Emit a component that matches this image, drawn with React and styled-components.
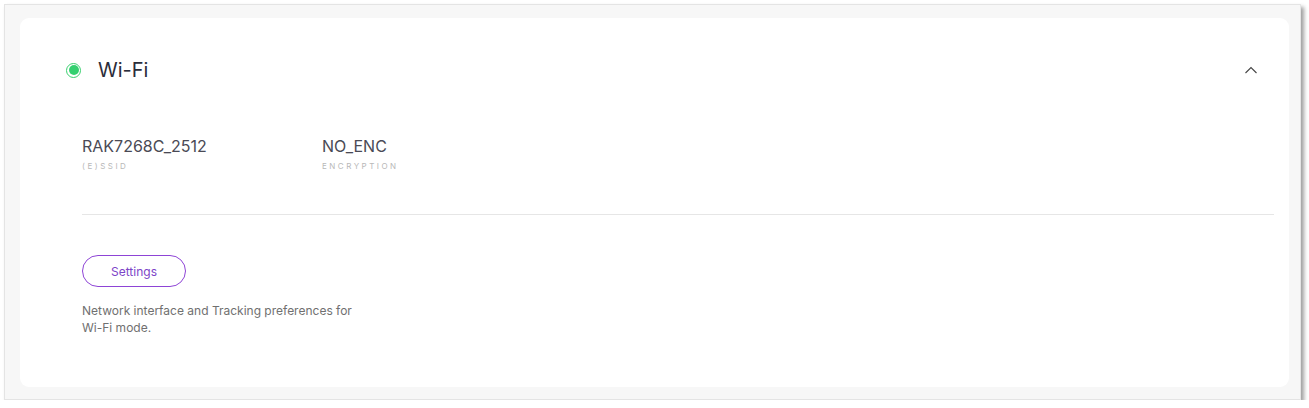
import React from "react";
import styled, { createGlobalStyle } from "styled-components";

const Global = createGlobalStyle`
  html, body { margin: 0; padding: 0; background: #ffffff; }
  body { font-family: Inter, "Noto Sans", sans-serif; }
  * { box-sizing: border-box; }
`;

const Frame = styled.div`
  margin: 4px 0 0 4px;
  width: 1297px;
  height: 396px;
  background: #f7f7f7;
  border: 1px solid #e4e4e4;
  box-shadow: 3px 3px 4px rgba(0, 0, 0, 0.38);
  padding: 13px 11px 12px 15px;
  display: flex;
`;

const Card = styled.section`
  flex: 1;
  background: #ffffff;
  border-radius: 9px;
  padding: 0 15px 0 62px;
  display: flex;
  flex-direction: column;
`;

const Header = styled.div`
  height: 104px;
  display: flex;
  align-items: center;
  margin-left: -16px;
`;

const StatusDot = styled.span`
  width: 15px;
  height: 15px;
  border-radius: 50%;
  border: 1.5px solid #3ad06f;
  display: flex;
  align-items: center;
  justify-content: center;
  &::after {
    content: "";
    width: 10px;
    height: 10px;
    border-radius: 50%;
    background: #34d070;
  }
`;

const Title = styled.h2`
  margin: 0 0 0 17px;
  font-size: 20px;
  font-weight: 400;
  color: #2b2d3a;
  flex: 1;
`;

const Chevron = styled.svg`
  width: 14px;
  height: 14px;
  margin-right: 16px;
`;

const Fields = styled.div`
  display: flex;
  padding-top: 14px;
  padding-bottom: 43px;
  border-bottom: 1px solid #e6e6e6;
`;

const Field = styled.div`
  width: 240px;
  display: flex;
  flex-direction: column;
`;

const Value = styled.div`
  font-size: 16px;
  color: #4a4a55;
  line-height: 20px;
`;

const Label = styled.div`
  font-size: 8px;
  letter-spacing: 2.5px;
  text-transform: uppercase;
  color: #b8b8b8;
  margin-top: 5px;
`;

const Actions = styled.div`
  padding-top: 40px;
  display: flex;
  flex-direction: column;
  align-items: flex-start;
`;

const OutlineButton = styled.button`
  width: 104px;
  height: 32px;
  border-radius: 16px;
  border: 1px solid #8e44d6;
  background: #fff;
  color: #7d45c8;
  font-family: Inter, sans-serif;
  font-size: 12px;
  cursor: pointer;
`;

const Description = styled.p`
  margin: 15px 0 0;
  width: 280px;
  font-size: 12px;
  line-height: 17px;
  color: #707070;
`;

export default function App() {
  return (
    <>
      <Global />
      <Frame>
        <Card>
          <Header>
            <StatusDot />
            <Title>Wi-Fi</Title>
            <Chevron viewBox="0 0 14 14" fill="none">
              <path d="M1.5 10 L7 4.5 L12.5 10" stroke="#444" strokeWidth="1.1" />
            </Chevron>
          </Header>
          <Fields>
            <Field>
              <Value>RAK7268C_2512</Value>
              <Label>(E)SSID</Label>
            </Field>
            <Field>
              <Value>NO_ENC</Value>
              <Label>Encryption</Label>
            </Field>
          </Fields>
          <Actions>
            <OutlineButton>Settings</OutlineButton>
            <Description>
              Network interface and Tracking preferences for Wi-Fi mode.
            </Description>
          </Actions>
        </Card>
      </Frame>
    </>
  );
}
